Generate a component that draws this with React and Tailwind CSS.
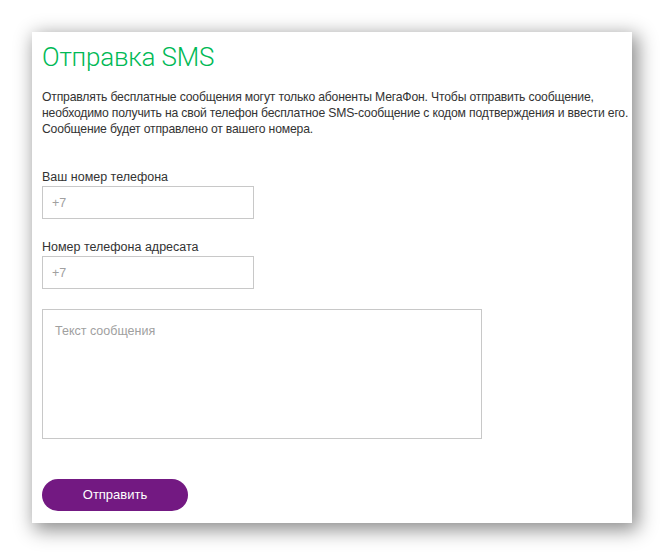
export default function App() {
  return (
    <div className="min-h-[555px] bg-white pt-8 pl-8" style={{ fontFamily: '"Liberation Sans", Arial, sans-serif' }}>
      <div className="w-[600px] h-[491px] bg-white px-[10px] pt-[10px] shadow-[4px_5px_18px_2px_rgba(0,0,0,0.45)]">
        <h1 className="font-['Roboto',sans-serif] text-[26px] font-light leading-[30px] tracking-[-0.2px] text-[#00b956]">Отправка SMS</h1>
        <p className="mt-[17px] whitespace-nowrap text-[12.2px] leading-[16px] tracking-[-0.18px] text-[#333]">
          Отправлять бесплатные сообщения могут только абоненты МегаФон. Чтобы отправить сообщение,
          <br />
          необходимо получить на свой телефон бесплатное SMS-сообщение с кодом подтверждения и ввести его.
          <br />
          Сообщение будет отправлено от вашего номера.
        </p>

        <label className="mt-8 block text-[12.5px] leading-[16px] text-[#333]">Ваш номер телефона</label>
        <input
          className="mt-px block h-[33px] w-[212px] border border-[#c8c8c8] px-[9px] text-[12.5px] outline-none placeholder:text-[#a0a0a0]"
          placeholder="+7"
        />

        <label className="mt-5 block text-[12.5px] leading-[16px] text-[#333]">Номер телефона адресата</label>
        <input
          className="mt-px block h-[33px] w-[212px] border border-[#c8c8c8] px-[9px] text-[12.5px] outline-none placeholder:text-[#a0a0a0]"
          placeholder="+7"
        />

        <textarea
          className="mt-5 block h-[130px] w-[440px] resize-none border border-[#c8c8c8] px-3 py-[13px] text-[12.5px] leading-[16px] outline-none placeholder:text-[#a0a0a0]"
          placeholder="Текст сообщения"
        />

        <button className="mt-10 block h-8 w-[146px] rounded-full bg-[#731982] text-[13px] text-white">
          Отправить
        </button>
      </div>
    </div>
  );
}
